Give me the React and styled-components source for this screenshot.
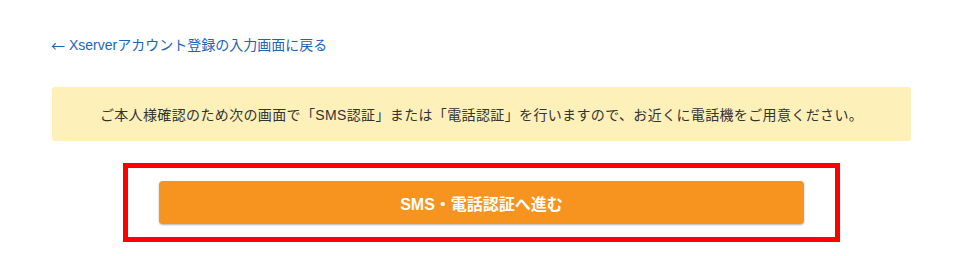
import React from "react";
import styled, { createGlobalStyle } from "styled-components";

const GlobalStyle = createGlobalStyle`
  body {
    margin: 0;
    background: #fff;
    font-family: "Liberation Sans", "Noto Sans CJK JP", sans-serif;
  }
`;

const App = () => (
  <>
    <GlobalStyle />
    <Page>
      <BackLink href="#">
        <Arrow>←</Arrow>Xserverアカウント登録の入力画面に戻る
      </BackLink>
      <Notice>
        ご本人様確認のため次の画面で「SMS認証」または「電話認証」を行いますので、お近くに電話機をご用意ください。
      </Notice>
      <Highlight>
        <NextButton type="button">SMS・電話認証へ進む</NextButton>
      </Highlight>
    </Page>
  </>
);

const Page = styled.div`
  width: 859px;
  padding: 35px 0 0 52px;
`;

const BackLink = styled.a`
  display: flex;
  align-items: center;
  margin-left: -1px;
  font-size: 14px;
  line-height: 20px;
  color: #2264b4;
  text-decoration: none;
`;

const Arrow = styled.span`
  font-family: "Noto Sans CJK JP", sans-serif;
  margin-right: 4px;
`;

const Notice = styled.div`
  margin-top: 32px;
  height: 54px;
  display: flex;
  align-items: center;
  justify-content: center;
  background: #fdf0b9;
  border-radius: 3px;
  color: #333;
  font-size: 14px;
  letter-spacing: 0.36px;
`;

const Highlight = styled.div`
  box-sizing: border-box;
  width: 717px;
  margin: 22px auto 0;
  border: 5px solid #ff0000;
  padding: 13px 31px;
`;

const NextButton = styled.button`
  display: block;
  width: 100%;
  height: 43px;
  border: none;
  border-radius: 4px;
  background: #f7941f;
  box-shadow: 0 1px 2px rgba(0, 0, 0, 0.3);
  color: #fff;
  font-family: "Liberation Sans", "Noto Sans CJK JP", sans-serif;
  font-size: 16px;
  font-weight: bold;
  cursor: pointer;
`;

export default App;
